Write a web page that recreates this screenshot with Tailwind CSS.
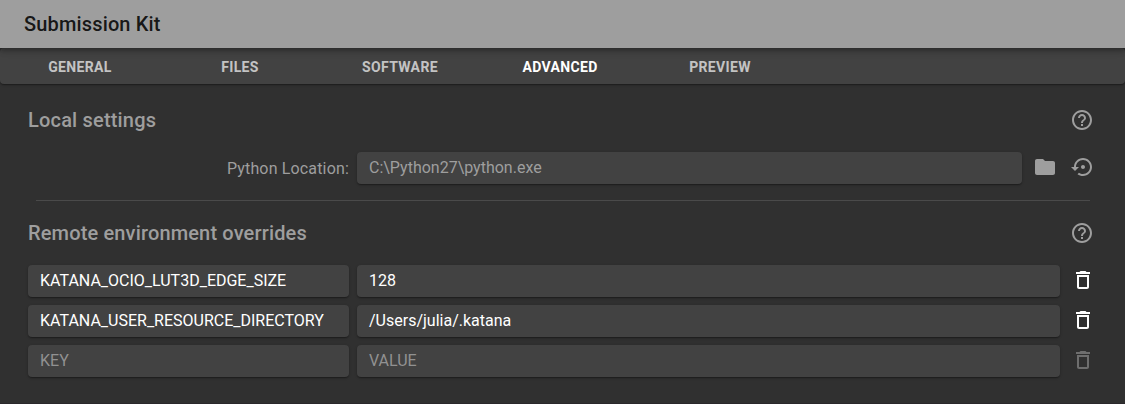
<!DOCTYPE html>
<html lang="en">
<head>
<meta charset="utf-8">
<title>Submission Kit</title>
<script src="https://cdn.jsdelivr.net/npm/@tailwindcss/browser@4"></script>
</head>
<body class="h-[404px] w-[1125px] overflow-hidden border-b border-[#2a282b] bg-[#303030] font-['Roboto',sans-serif] text-base text-[#9e9e9e]">
<svg class="hidden">
  <symbol id="help" viewBox="0 0 24 24"><path d="M11 18h2v-2h-2v2zm1-16C6.480 2 2 6.480 2 12s4.480 10 10 10 10-4.480 10-10S17.520 2 12 2zm0 18c-4.410 0-8-3.590-8-8s3.590-8 8-8 8 3.590 8 8-3.590 8-8 8zm0-14c-2.210 0-4 1.790-4 4h2c0-1.100.900-2 2-2s2 .900 2 2c0 2-3 1.750-3 5h2c0-2.250 3-2.500 3-5 0-2.210-1.790-4-4-4z"/></symbol>
  <symbol id="folder" viewBox="0 0 24 24"><path d="M10 4H4c-1.100 0-1.990.900-1.990 2L2 18c0 1.100.900 2 2 2h16c1.100 0 2-.900 2-2V8c0-1.100-.900-2-2-2h-8l-2-2z"/></symbol>
  <symbol id="restore" viewBox="0 0 24 24"><path d="M14 12c0-1.100-.900-2-2-2s-2 .900-2 2 .900 2 2 2 2-.900 2-2zm-2-9c-4.970 0-9 4.030-9 9H0l4 4 4-4H5c0-3.870 3.130-7 7-7s7 3.130 7 7-3.130 7-7 7c-1.510 0-2.910-.490-4.060-1.300l-1.420 1.440C8.040 20.300 9.940 21 12 21c4.970 0 9-4.030 9-9s-4.030-9-9-9z"/></symbol>
  <symbol id="trash" viewBox="0 0 24 24"><path d="M6 19c0 1.100.900 2 2 2h8c1.100 0 2-.900 2-2V7H6v12zM8 9h8v10H8V9zm7.500-5l-1-1h-5l-1 1H5v2h14V4z"/></symbol>
</svg>

<header class="relative z-10 flex h-12 items-center bg-[#9e9e9e] pl-6 text-black/87 shadow-[0_2px_4px_-1px_rgba(0,0,0,0.2),0_4px_5px_0_rgba(0,0,0,0.14),0_1px_10px_0_rgba(0,0,0,0.12)]">
  <h1 class="text-xl font-medium tracking-[0.15px]">Submission Kit</h1>
</header>

<nav class="flex h-9 items-center rounded bg-[#424242] pt-0.5 text-center text-sm font-bold tracking-[0.35px] text-white/70 shadow-[0_1px_3px_0_rgba(0,0,0,0.2),0_1px_1px_0_rgba(0,0,0,0.14),0_2px_1px_-1px_rgba(0,0,0,0.12)]">
  <a class="w-40">GENERAL</a>
  <a class="w-40">FILES</a>
  <a class="w-40">SOFTWARE</a>
  <a class="w-40 text-white">ADVANCED</a>
  <a class="w-40">PREVIEW</a>
</nav>

<main class="flex flex-col pl-7 pt-6">
  <div class="flex h-6 items-center justify-between pr-[31px]">
    <h2 class="text-xl font-medium tracking-[0.18px]">Local settings</h2>
    <svg class="size-6 fill-current"><use href="#help"/></svg>
  </div>

  <div class="mt-5 flex h-8 items-center">
    <label class="w-[321px] pt-0.5 text-right tracking-[0.16px]">Python Location:</label>
    <div class="ml-2 h-8 w-[665px] rounded bg-[#424242] pl-3 leading-[31px] shadow-[0_1px_3px_0_rgba(0,0,0,0.2),0_1px_1px_0_rgba(0,0,0,0.14),0_2px_1px_-1px_rgba(0,0,0,0.12)]">C:\Python27\python.exe</div>
    <svg class="mb-0.5 ml-[11px] size-6 fill-current"><use href="#folder"/></svg>
    <svg class="mb-0.5 ml-[14px] size-6 fill-current"><use href="#restore"/></svg>
  </div>

  <hr class="ml-2 mt-4 w-[1054px] border-[#4a4a4a]">

  <div class="mt-5 flex h-6 items-center justify-between pr-[31px]">
    <h2 class="text-xl font-medium tracking-[0.15px]">Remote environment overrides</h2>
    <svg class="size-6 fill-current"><use href="#help"/></svg>
  </div>

  <div class="mt-5 grid grid-cols-[321px_703px_24px] items-center gap-x-2 gap-y-2 leading-[31px] text-white *:[div]:h-8 *:[div]:rounded *:[div]:bg-[#424242] *:[div]:pl-3 *:[div]:shadow-[0_1px_3px_0_rgba(0,0,0,0.2),0_1px_1px_0_rgba(0,0,0,0.14),0_2px_1px_-1px_rgba(0,0,0,0.12)]">
    <div>KATANA_OCIO_LUT3D_EDGE_SIZE</div>
    <div>128</div>
    <svg class="ml-[3px] mb-0.5 size-6 fill-current"><use href="#trash"/></svg>
    <div>KATANA_USER_RESOURCE_DIRECTORY</div>
    <div>/Users/julia/.katana</div>
    <svg class="ml-[3px] mb-0.5 size-6 fill-current"><use href="#trash"/></svg>
    <div class="text-[#919191]">KEY</div>
    <div class="text-[#919191]">VALUE</div>
    <svg class="ml-[3px] mb-0.5 size-6 fill-current text-[#6e6e6e]"><use href="#trash"/></svg>
  </div>
</main>
</body>
</html>
